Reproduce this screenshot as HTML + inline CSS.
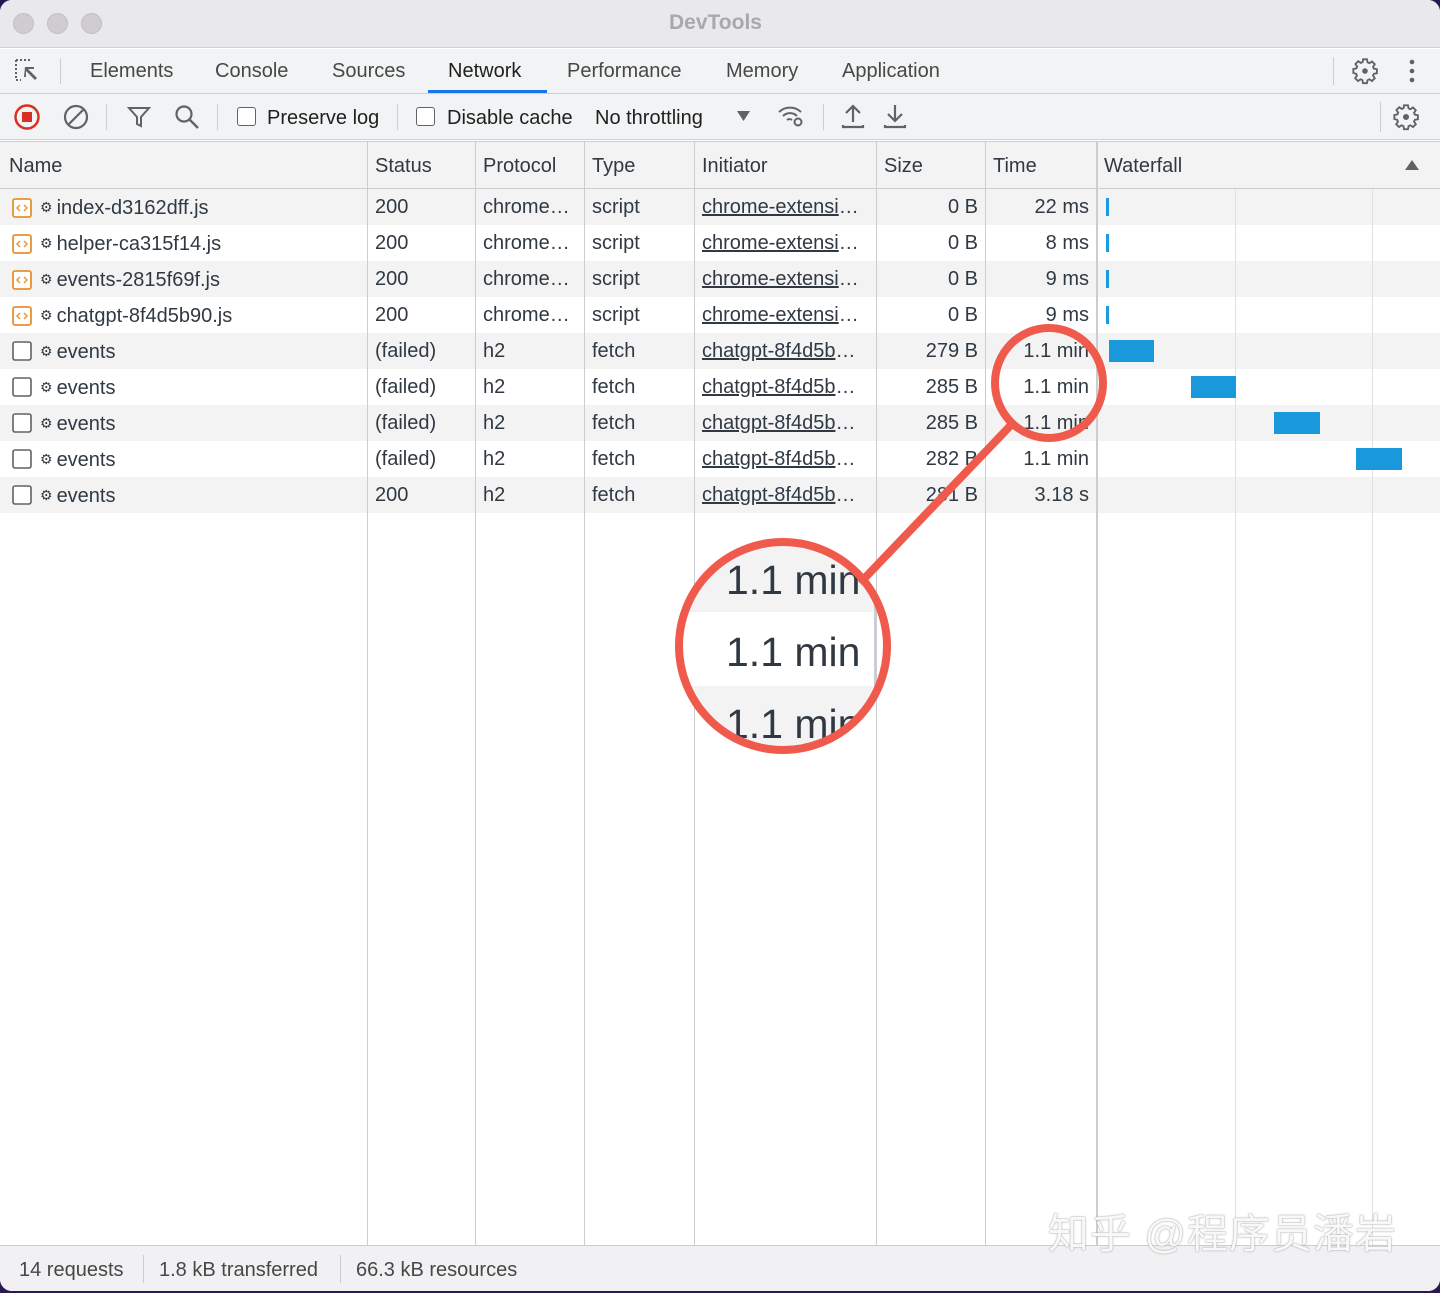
<!DOCTYPE html>
<html><head><meta charset="utf-8"><style>
*{margin:0;padding:0;box-sizing:border-box}
body{width:1440px;height:1293px;background:#2a1850;font-family:"Liberation Sans",Arial,sans-serif;color:#303942;overflow:hidden;position:relative}
.win{position:absolute;left:0;top:0;width:1440px;height:1291px;background:#fff;border-radius:12px;overflow:hidden}
.abs{position:absolute}
.t{position:absolute;font-size:20px;white-space:nowrap;line-height:24px}
.title{position:absolute;left:0;top:0;width:1440px;height:48px;background:#e9e8ec;border-bottom:1px solid #d3d3d6}
.dot{position:absolute;top:13px;width:21px;height:21px;border-radius:50%;background:#cfcdd2;border:1px solid #c0bec3}
.bar{position:absolute;left:0;width:1440px;background:#f1f3f4;border-bottom:1px solid #d0d0d0}
.vl{position:absolute;width:1px;background:#cacdd1}
.row{position:absolute;left:0;width:1440px;height:36px}
.g{background:#f3f3f3}
.u{text-decoration:underline}
.cb{position:absolute;width:19px;height:19px;border:1.5px solid #5f6368;border-radius:3px;background:#fff}
.r{text-align:right}
.gr{font-size:14px;vertical-align:2px;margin-right:4px}
</style></head><body>
<div class="win">
<div class="title">
<div class="dot" style="left:13px"></div><div class="dot" style="left:47px"></div><div class="dot" style="left:81px"></div>
<div class="t" style="left:669px;top:11px;font-weight:bold;color:#a9a8ad;font-size:21px">DevTools</div>
</div>
<div class="bar" style="top:49px;height:45px"></div>
<svg class="abs" style="left:14px;top:58px" width="28" height="26" viewBox="0 0 28 26"><path d="M2 2h14M2 2v20M2 22h5" stroke="#5f6368" stroke-width="2" stroke-dasharray="2 2" fill="none"/><path d="M11 9h9v2h-6l9 9-2 2-9-9v6h-2z" fill="#5f6368"/></svg>
<div class="vl" style="left:60px;top:58px;height:26px"></div>
<div class="t" style="left:90px;top:59px;color:#474747">Elements</div>
<div class="t" style="left:215px;top:59px;color:#474747">Console</div>
<div class="t" style="left:332px;top:59px;color:#474747">Sources</div>
<div class="t" style="left:448px;top:59px;color:#1f1f1f">Network</div>
<div class="abs" style="left:428px;top:90px;width:119px;height:3px;background:#1a73e8"></div>
<div class="t" style="left:567px;top:59px;color:#474747">Performance</div>
<div class="t" style="left:726px;top:59px;color:#474747">Memory</div>
<div class="t" style="left:842px;top:59px;color:#474747">Application</div>
<div class="vl" style="left:1333px;top:57px;height:28px"></div>
<svg class="abs" style="left:1351px;top:57px" width="28" height="28" viewBox="0 0 24 24"><path d="M10.3 2h3.4l.5 2.6 1.6.7 2.2-1.5 2.4 2.4-1.5 2.2.7 1.6 2.6.5v3.4l-2.6.5-.7 1.6 1.5 2.2-2.4 2.4-2.2-1.5-1.6.7-.5 2.6h-3.4l-.5-2.6-1.6-.7-2.2 1.5-2.4-2.4 1.5-2.2-.7-1.6L2 13.7v-3.4l2.6-.5.7-1.6-1.5-2.2 2.4-2.4 2.2 1.5 1.6-.7z" fill="none" stroke="#5f6368" stroke-width="1.6"/><circle cx="12" cy="12" r="2.4" fill="#5f6368"/></svg>
<svg class="abs" style="left:1406px;top:58px" width="12" height="26"><circle cx="6" cy="4" r="2.3" fill="#5f6368"/><circle cx="6" cy="13" r="2.3" fill="#5f6368"/><circle cx="6" cy="22" r="2.3" fill="#5f6368"/></svg>

<div class="bar" style="top:94px;height:46px"></div>
<svg class="abs" style="left:13px;top:103px" width="28" height="28"><circle cx="14" cy="14" r="11.5" fill="none" stroke="#d93025" stroke-width="2.5"/><rect x="9" y="9" width="10" height="10" fill="#d93025"/></svg>
<svg class="abs" style="left:62px;top:103px" width="28" height="28"><circle cx="14" cy="14" r="11" fill="none" stroke="#5f6368" stroke-width="2.2"/><path d="M7 21L21 7" stroke="#5f6368" stroke-width="2.2"/></svg>
<div class="vl" style="left:106px;top:104px;height:26px"></div>
<svg class="abs" style="left:127px;top:105px" width="24" height="24"><path d="M2 3h20l-8 9v9l-4-2v-7z" fill="none" stroke="#5f6368" stroke-width="2"/></svg>
<svg class="abs" style="left:173px;top:103px" width="28" height="28"><circle cx="11" cy="11" r="7.5" fill="none" stroke="#5f6368" stroke-width="2.2"/><path d="M16.5 16.5L25 25" stroke="#5f6368" stroke-width="2.4"/></svg>
<div class="vl" style="left:217px;top:104px;height:26px"></div>
<div class="cb" style="left:237px;top:107px"></div>
<div class="t" style="left:267px;top:106px;color:#1f1f1f">Preserve log</div>
<div class="vl" style="left:397px;top:104px;height:26px"></div>
<div class="cb" style="left:416px;top:107px"></div>
<div class="t" style="left:447px;top:106px;color:#1f1f1f">Disable cache</div>
<div class="t" style="left:595px;top:106px;color:#1f1f1f">No throttling</div>
<svg class="abs" style="left:737px;top:110px" width="14" height="12"><path d="M0 1h13L6.5 11z" fill="#5f6368"/></svg>
<svg class="abs" style="left:776px;top:102px" width="30" height="28" viewBox="0 0 30 28"><path d="M3 10a16 16 0 0 1 22 0M7 14a10 10 0 0 1 14 0M11 18a4 4 0 0 1 5 0" fill="none" stroke="#5f6368" stroke-width="2"/><circle cx="22" cy="20" r="3.5" fill="none" stroke="#5f6368" stroke-width="2"/></svg>
<div class="vl" style="left:823px;top:104px;height:26px"></div>
<svg class="abs" style="left:841px;top:103px" width="24" height="26"><path d="M12 19V3M5 10l7-7 7 7M2 22v2h20v-2" fill="none" stroke="#5f6368" stroke-width="2.2"/></svg>
<svg class="abs" style="left:883px;top:103px" width="24" height="26"><path d="M12 2v16M5 11l7 7 7-7M2 22v2h20v-2" fill="none" stroke="#5f6368" stroke-width="2.2"/></svg>
<div class="vl" style="left:1380px;top:102px;height:30px"></div>
<svg class="abs" style="left:1392px;top:103px" width="28" height="28" viewBox="0 0 24 24"><path d="M10.3 2h3.4l.5 2.6 1.6.7 2.2-1.5 2.4 2.4-1.5 2.2.7 1.6 2.6.5v3.4l-2.6.5-.7 1.6 1.5 2.2-2.4 2.4-2.2-1.5-1.6.7-.5 2.6h-3.4l-.5-2.6-1.6-.7-2.2 1.5-2.4-2.4 1.5-2.2-.7-1.6L2 13.7v-3.4l2.6-.5.7-1.6-1.5-2.2 2.4-2.4 2.2 1.5 1.6-.7z" fill="none" stroke="#5f6368" stroke-width="1.6"/><circle cx="12" cy="12" r="2.6" fill="#5f6368"/></svg>

<div class="abs" style="left:0;top:141px;width:1440px;height:48px;background:#f3f3f3;border-top:1px solid #cacdd1;border-bottom:1px solid #cacdd1"></div>
<div class="t" style="left:9px;top:154px">Name</div>
<div class="t" style="left:375px;top:154px">Status</div>
<div class="t" style="left:483px;top:154px">Protocol</div>
<div class="t" style="left:592px;top:154px">Type</div>
<div class="t" style="left:702px;top:154px">Initiator</div>
<div class="t" style="left:884px;top:154px">Size</div>
<div class="t" style="left:993px;top:154px">Time</div>
<div class="t" style="left:1104px;top:154px">Waterfall</div>
<svg class="abs" style="left:1405px;top:159px" width="14" height="12"><path d="M0 11h14L7 1z" fill="#5f6368"/></svg>

<div class="row g" style="top:189px"></div>
<div class="row g" style="top:261px"></div>
<div class="row g" style="top:333px"></div>
<div class="row g" style="top:405px"></div>
<div class="row g" style="top:477px"></div>

<div class="vl" style="left:367px;top:141px;height:1104px"></div>
<div class="vl" style="left:475px;top:141px;height:1104px"></div>
<div class="vl" style="left:584px;top:141px;height:1104px"></div>
<div class="vl" style="left:694px;top:141px;height:1104px"></div>
<div class="vl" style="left:876px;top:141px;height:1104px"></div>
<div class="vl" style="left:985px;top:141px;height:1104px"></div>
<div class="vl" style="left:1096px;top:141px;height:1104px;width:2px"></div>
<div class="vl" style="left:1235px;top:189px;height:1056px;background:#e0e0e0"></div>
<div class="vl" style="left:1372px;top:189px;height:1056px;background:#e0e0e0"></div>

<svg class="abs" style="left:12px;top:198px" width="20" height="128"><g fill="#fff" stroke="#e8912d" stroke-width="1.8"><rect x="1" y="1" width="18" height="18" rx="2"/><rect x="1" y="37" width="18" height="18" rx="2"/><rect x="1" y="73" width="18" height="18" rx="2"/><rect x="1" y="109" width="18" height="18" rx="2"/></g><g fill="none" stroke="#e8912d" stroke-width="1.4"><path d="M8 7l-3 3 3 3M12 7l3 3-3 3"/><path d="M8 43l-3 3 3 3M12 43l3 3-3 3"/><path d="M8 79l-3 3 3 3M12 79l3 3-3 3"/><path d="M8 115l-3 3 3 3M12 115l3 3-3 3"/></g></svg>
<svg class="abs" style="left:12px;top:341px" width="22" height="164"><g fill="#fff" stroke="#5f6368" stroke-width="1.6"><rect x="1" y="1" width="18" height="18" rx="2"/><rect x="1" y="37" width="18" height="18" rx="2"/><rect x="1" y="73" width="18" height="18" rx="2"/><rect x="1" y="109" width="18" height="18" rx="2"/><rect x="1" y="145" width="18" height="18" rx="2"/></g></svg>

<div class="t" style="left:40px;top:195px"><span class="gr">⚙</span>index-d3162dff.js</div>
<div class="t" style="left:40px;top:231px"><span class="gr">⚙</span>helper-ca315f14.js</div>
<div class="t" style="left:40px;top:267px"><span class="gr">⚙</span>events-2815f69f.js</div>
<div class="t" style="left:40px;top:303px"><span class="gr">⚙</span>chatgpt-8f4d5b90.js</div>
<div class="t" style="left:40px;top:339px"><span class="gr">⚙</span>events</div>
<div class="t" style="left:40px;top:375px"><span class="gr">⚙</span>events</div>
<div class="t" style="left:40px;top:411px"><span class="gr">⚙</span>events</div>
<div class="t" style="left:40px;top:447px"><span class="gr">⚙</span>events</div>
<div class="t" style="left:40px;top:483px"><span class="gr">⚙</span>events</div>

<div class="t" style="left:375px;top:195px">200</div><div class="t" style="left:375px;top:231px">200</div><div class="t" style="left:375px;top:267px">200</div><div class="t" style="left:375px;top:303px">200</div>
<div class="t" style="left:375px;top:339px">(failed)</div><div class="t" style="left:375px;top:375px">(failed)</div><div class="t" style="left:375px;top:411px">(failed)</div><div class="t" style="left:375px;top:447px">(failed)</div><div class="t" style="left:375px;top:483px">200</div>

<div class="t" style="left:483px;top:195px">chrome…</div><div class="t" style="left:483px;top:231px">chrome…</div><div class="t" style="left:483px;top:267px">chrome…</div><div class="t" style="left:483px;top:303px">chrome…</div>
<div class="t" style="left:483px;top:339px">h2</div><div class="t" style="left:483px;top:375px">h2</div><div class="t" style="left:483px;top:411px">h2</div><div class="t" style="left:483px;top:447px">h2</div><div class="t" style="left:483px;top:483px">h2</div>

<div class="t" style="left:592px;top:195px">script</div><div class="t" style="left:592px;top:231px">script</div><div class="t" style="left:592px;top:267px">script</div><div class="t" style="left:592px;top:303px">script</div>
<div class="t" style="left:592px;top:339px">fetch</div><div class="t" style="left:592px;top:375px">fetch</div><div class="t" style="left:592px;top:411px">fetch</div><div class="t" style="left:592px;top:447px">fetch</div><div class="t" style="left:592px;top:483px">fetch</div>

<div class="t" style="left:702px;top:195px"><span class="u">chrome-extensi</span>…</div><div class="t" style="left:702px;top:231px"><span class="u">chrome-extensi</span>…</div><div class="t" style="left:702px;top:267px"><span class="u">chrome-extensi</span>…</div><div class="t" style="left:702px;top:303px"><span class="u">chrome-extensi</span>…</div>
<div class="t" style="left:702px;top:339px"><span class="u">chatgpt-8f4d5b</span>…</div><div class="t" style="left:702px;top:375px"><span class="u">chatgpt-8f4d5b</span>…</div><div class="t" style="left:702px;top:411px"><span class="u">chatgpt-8f4d5b</span>…</div><div class="t" style="left:702px;top:447px"><span class="u">chatgpt-8f4d5b</span>…</div><div class="t" style="left:702px;top:483px"><span class="u">chatgpt-8f4d5b</span>…</div>

<div class="t r" style="left:880px;width:98px;top:195px">0 B</div><div class="t r" style="left:880px;width:98px;top:231px">0 B</div><div class="t r" style="left:880px;width:98px;top:267px">0 B</div><div class="t r" style="left:880px;width:98px;top:303px">0 B</div>
<div class="t r" style="left:880px;width:98px;top:339px">279 B</div><div class="t r" style="left:880px;width:98px;top:375px">285 B</div><div class="t r" style="left:880px;width:98px;top:411px">285 B</div><div class="t r" style="left:880px;width:98px;top:447px">282 B</div><div class="t r" style="left:880px;width:98px;top:483px">281 B</div>

<div class="t r" style="left:990px;width:99px;top:195px">22 ms</div><div class="t r" style="left:990px;width:99px;top:231px">8 ms</div><div class="t r" style="left:990px;width:99px;top:267px">9 ms</div><div class="t r" style="left:990px;width:99px;top:303px">9 ms</div>
<div class="t r" style="left:990px;width:99px;top:339px">1.1 min</div><div class="t r" style="left:990px;width:99px;top:375px">1.1 min</div><div class="t r" style="left:990px;width:99px;top:411px">1.1 min</div><div class="t r" style="left:990px;width:99px;top:447px">1.1 min</div><div class="t r" style="left:990px;width:99px;top:483px">3.18 s</div>

<div class="abs" style="left:1106px;top:198px;width:3px;height:18px;background:#1a9be0"></div>
<div class="abs" style="left:1106px;top:234px;width:3px;height:18px;background:#1a9be0"></div>
<div class="abs" style="left:1106px;top:270px;width:3px;height:18px;background:#1a9be0"></div>
<div class="abs" style="left:1106px;top:306px;width:3px;height:18px;background:#1a9be0"></div>
<div class="abs" style="left:1109px;top:340px;width:45px;height:22px;background:#1a98dc"></div>
<div class="abs" style="left:1191px;top:376px;width:45px;height:22px;background:#1a98dc"></div>
<div class="abs" style="left:1274px;top:412px;width:46px;height:22px;background:#1a98dc"></div>
<div class="abs" style="left:1356px;top:448px;width:46px;height:22px;background:#1a98dc"></div>

<svg class="abs" style="left:0;top:0" width="1440" height="1293">
<defs><clipPath id="cc"><circle cx="783" cy="646" r="104"/></clipPath></defs>
<g clip-path="url(#cc)">
<rect x="670" y="530" width="230" height="240" fill="#fff"/>
<rect x="670" y="540" width="230" height="72" fill="#f3f3f3"/>
<rect x="670" y="686" width="230" height="80" fill="#f3f3f3"/>
<rect x="874" y="530" width="3" height="240" fill="#cacdd1"/>
<g font-family="Liberation Sans,Arial,sans-serif" font-size="41" fill="#303942">
<text x="726" y="594">1.1 min</text><text x="726" y="666">1.1 min</text><text x="726" y="738">1.1 min</text></g>
</g>
<g fill="none" stroke="#ef5a4c" stroke-width="8">
<circle cx="783" cy="646" r="104"/>
<ellipse cx="1049" cy="383" rx="54" ry="55"/>
<path d="M1012 424L860 583"/>
</g>
</svg>

<div class="abs" style="left:0;top:1245px;width:1440px;height:48px;background:#f1f1f3;border-top:1px solid #cacdd1"></div>
<div class="t" style="left:19px;top:1258px;color:#474747">14 requests</div>
<div class="vl" style="left:143px;top:1255px;height:28px"></div>
<div class="t" style="left:159px;top:1258px;color:#474747">1.8 kB transferred</div>
<div class="vl" style="left:340px;top:1255px;height:28px"></div>
<div class="t" style="left:356px;top:1258px;color:#474747">66.3 kB resources</div>

<div class="t" style="left:1048px;top:1210px;font-size:41px;line-height:48px;color:#f8f8f8;font-family:'Liberation Sans','Noto Sans CJK SC',sans-serif;text-shadow:0 0 1px #999,0 0 2px #bbb;letter-spacing:1px">知乎 @程序员潘岩</div>
</div>
</body></html>
